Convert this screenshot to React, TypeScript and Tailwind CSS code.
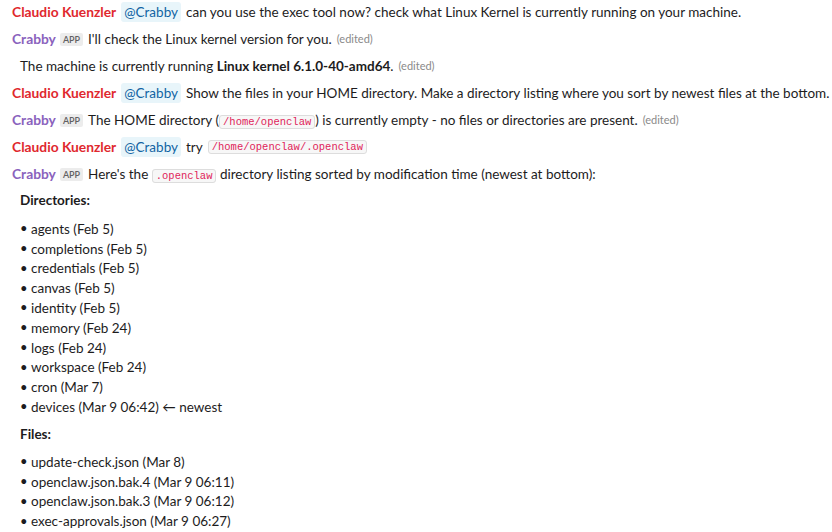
const red = "text-[#e0282e]";
const purple = "text-[#8a62bd]";

function Claudio() {
    return <span className={`font-bold ${red} text-[13.8px]`}>Claudio Kuenzler</span>;
}

function Crabby() {
    return (
        <span className="inline-flex items-center gap-[4px]">
            <span className={`font-bold ${purple} text-[13.8px]`}>Crabby</span>
            <span className="bg-[#ececec] text-[#616061] text-[9px] leading-[13px] px-[3px] rounded-[2px] font-semibold">APP</span>
        </span>
    );
}

function Mention() {
    return <span className="bg-[#e8f5fa] text-[#1264a3] px-[3px] rounded-[3px] leading-[20px]">@Crabby</span>;
}

function Code({ children }: { children: string }) {
    return (
        <code className="bg-[#f7f7f7] border border-[#dddddd] rounded-[3px] px-[3px] text-[#e01e5a] text-[10.5px] leading-[12px] font-['Liberation_Mono',monospace]">
            {children}
        </code>
    );
}

function Edited() {
    return <span className="text-[#8a8a8a] text-[11px]">(edited)</span>;
}

const dirs = [
    "agents (Feb 5)",
    "completions (Feb 5)",
    "credentials (Feb 5)",
    "canvas (Feb 5)",
    "identity (Feb 5)",
    "memory (Feb 24)",
    "logs (Feb 24)",
    "workspace (Feb 24)",
    "cron (Mar 7)",
    "devices (Mar 9 06:42) ← newest",
];

const files = [
    "update-check.json (Mar 8)",
    "openclaw.json.bak.4 (Mar 9 06:11)",
    "openclaw.json.bak.3 (Mar 9 06:12)",
    "exec-approvals.json (Mar 9 06:27)",
];

function Row({ children, indent }: { children: React.ReactNode; indent?: boolean }) {
    return (
        <div className={`h-[24px] flex items-center gap-[5px] whitespace-nowrap ${indent ? "pl-[20px]" : "pl-[12px]"}`}>
            {children}
        </div>
    );
}

function List({ items }: { items: string[] }) {
    return (
        <ul className="pl-[20px] flex flex-col">
            {items.map((it) => (
                <li key={it} className="h-[19.8px] flex items-center">
                    <span className="w-[11px] text-[13px]">•</span>
                    <span>{it}</span>
                </li>
            ))}
        </ul>
    );
}

export default function App() {
    return (
        <div className="w-[832px] h-[532px] overflow-hidden bg-white text-[#1d1c1d] text-[13.5px] font-['Lato',sans-serif]">
            <div className="flex flex-col gap-[3px]">
                <Row>
                    <Claudio />
                    <Mention />
                    <span>can you use the exec tool now? check what Linux Kernel is currently running on your machine.</span>
                </Row>
                <Row>
                    <Crabby />
                    <span>I'll check the Linux kernel version for you.</span>
                    <Edited />
                </Row>
                <Row indent>
                    <span>
                        The machine is currently running <b>Linux kernel 6.1.0-40-amd64</b>.
                    </span>
                    <Edited />
                </Row>
                <Row>
                    <Claudio />
                    <Mention />
                    <span>Show the files in your HOME directory. Make a directory listing where you sort by newest files at the bottom.</span>
                </Row>
                <Row>
                    <Crabby />
                    <span>
                        The HOME directory (<Code>/home/openclaw</Code>) is currently empty - no files or directories are present.
                    </span>
                    <Edited />
                </Row>
                <Row>
                    <Claudio />
                    <Mention />
                    <span>try</span>
                    <Code>/home/openclaw/.openclaw</Code>
                </Row>
                <Row>
                    <Crabby />
                    <span>
                        Here's the <Code>.openclaw</Code> directory listing sorted by modification time (newest at bottom):
                    </span>
                </Row>
            </div>
            <div className="pl-[20px] mt-[2px] h-[24px] flex items-center font-bold">Directories:</div>
            <div className="mt-[7px]">
                <List items={dirs} />
            </div>
            <div className="pl-[20px] mt-[5px] h-[24px] flex items-center font-bold">Files:</div>
            <div className="mt-[6px]">
                <List items={files} />
            </div>
        </div>
    );
}
